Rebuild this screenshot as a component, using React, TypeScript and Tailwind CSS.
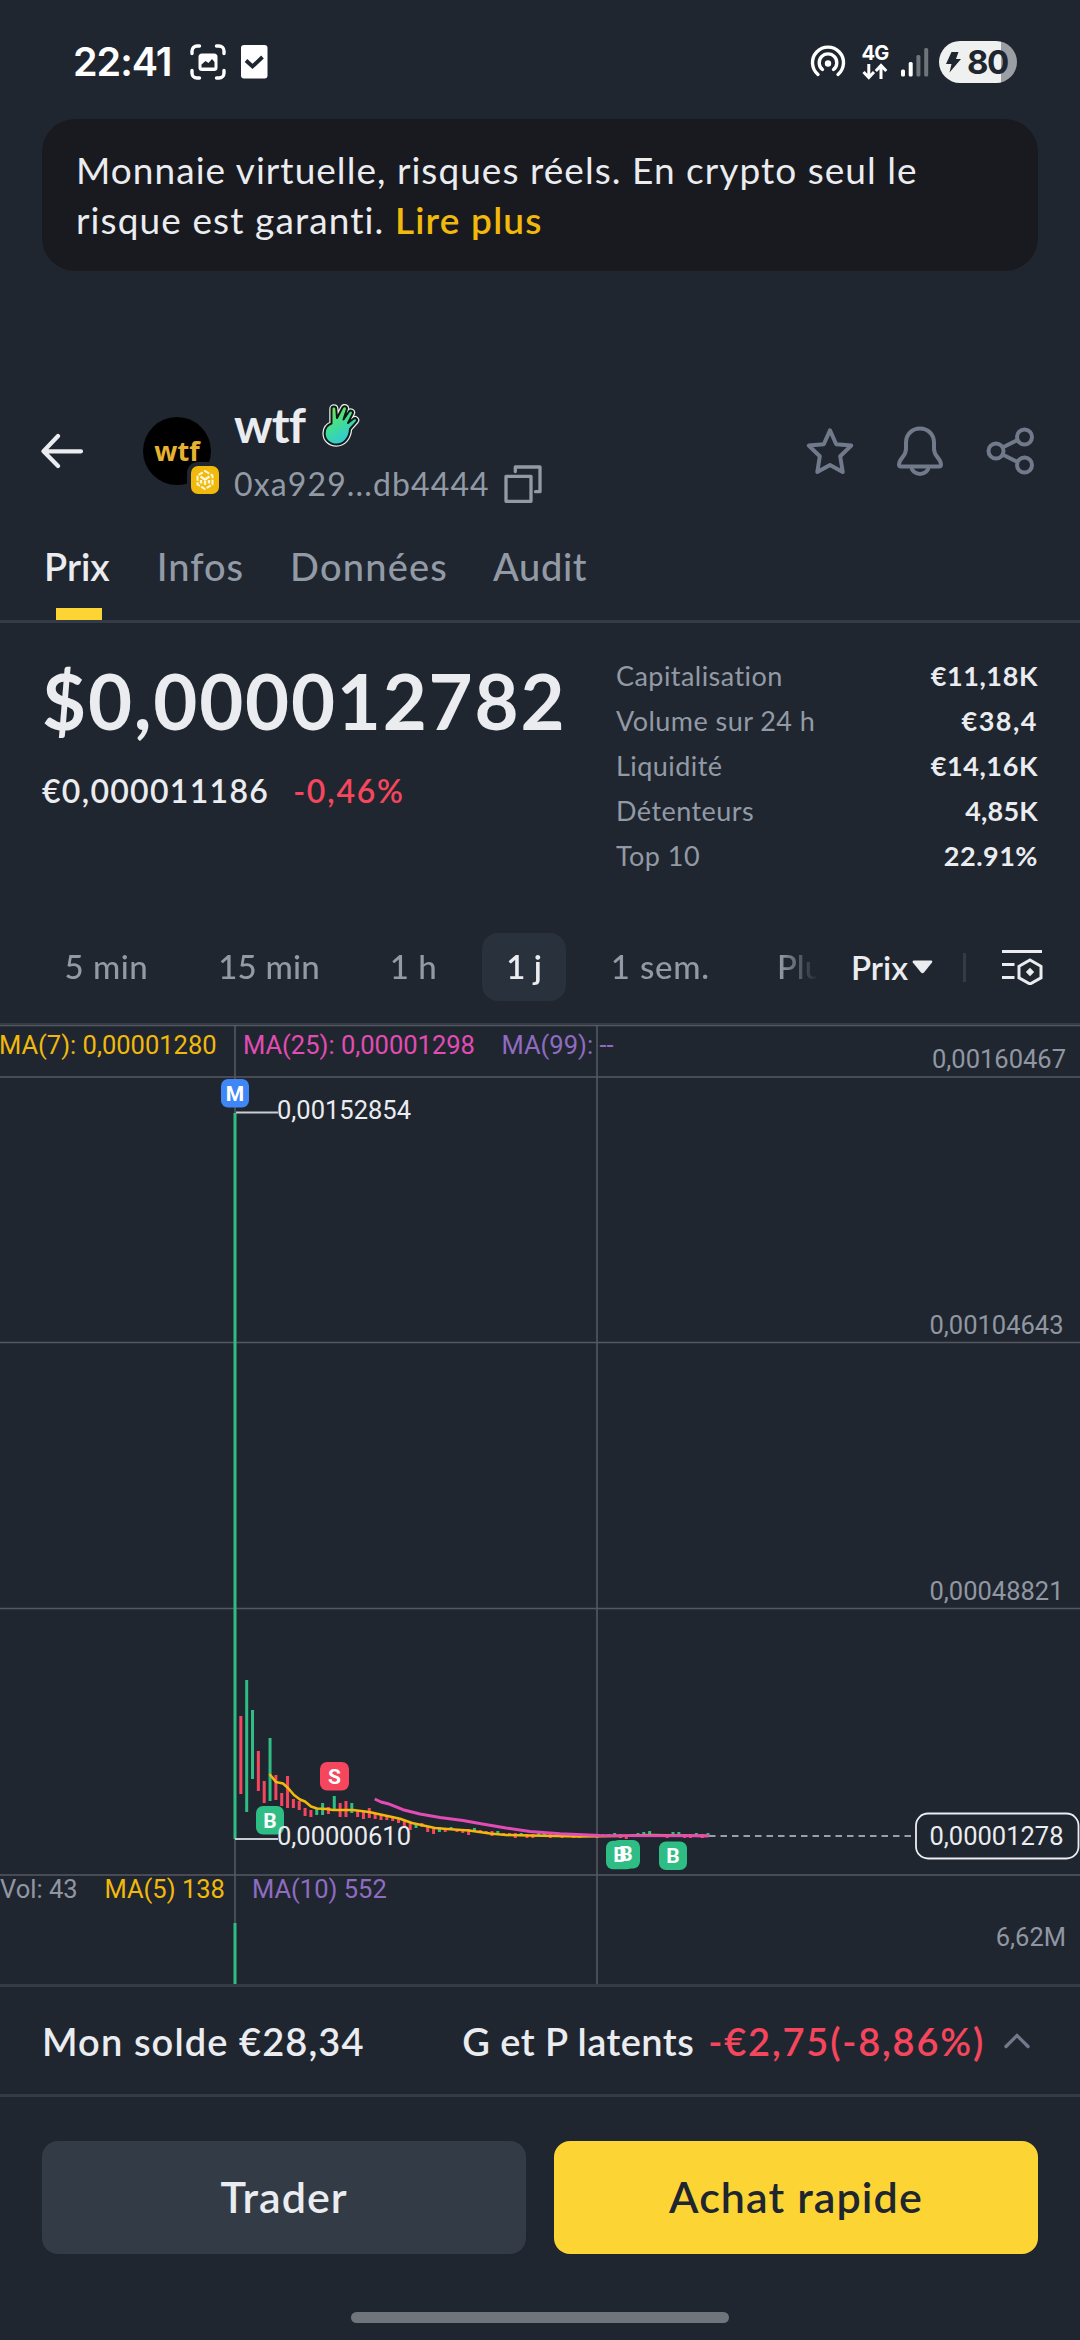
import type { ReactNode } from "react";

function StatusBar() {
  return (
    <div className="flex h-[119px] items-center pt-[5px] pl-[73px] pr-[63px] text-white">
      <span className="w-[117px] font-[Inter] text-[39.5px] font-semibold tracking-[-1px] leading-[48px]">22:41</span>
      <svg className="h-[36px] w-[36px]" viewBox="0 0 36 36" fill="none">
        <g stroke="#fff" strokeWidth="3.4" strokeLinecap="round">
          <path d="M2 9.500V7a5 5 0 0 1 5-5h2.500M26.500 2H29a5 5 0 0 1 5 5v2.500M34 26.500V29a5 5 0 0 1-5 5h-2.500M9.500 34H7a5 5 0 0 1-5-5v-2.500" />
        </g>
        <rect x="8.500" y="9.500" width="19" height="17.500" rx="3.500" fill="#fff" />
        <path d="M11.500 23.500v-3l4-3.500 3 2 3.500-4 2.500 3v5.500z" fill="#202630" />
      </svg>
      <svg className="ml-[15px] h-[34px] w-[27px]" viewBox="0 0 27 34" fill="none">
        <rect width="26.500" height="33.500" rx="3" fill="#fff" />
        <path d="M5 15.500l6.500 6L21.500 12" stroke="#202630" strokeWidth="3.800" />
      </svg>
      <div className="flex-1" />
      <svg className="h-[34px] w-[36px]" viewBox="0 0 36 34" fill="none" stroke="#fff" strokeWidth="3.400" strokeLinecap="round">
        <path d="M8 29.500a15.500 15.500 0 1 1 20 0" />
        <path d="M12.500 24.500a8.800 8.800 0 1 1 11 0" />
        <circle cx="18" cy="18.500" r="3.200" fill="#fff" stroke="none" />
      </svg>
      <div className="ml-[16px] flex w-[26px] flex-col items-center">
        <span className="font-[Inter] text-[20px] font-bold leading-[19px] tracking-[-0.8px]">4G</span>
        <svg className="h-[17px] w-[26px]" viewBox="0 0 26 17" fill="none" stroke="#fff" strokeWidth="3">
          <path d="M6.800 1v13M1.500 9l5.300 5.500L12 9M19 16V3M13.800 8L19 2.500 24.300 8" />
        </svg>
      </div>
      <svg className="ml-[12px] h-[30px] w-[29px]" viewBox="0 0 29 30">
        <rect x="1" y="22.500" width="4" height="7" rx="1.500" fill="#fff" />
        <rect x="8.700" y="15" width="4" height="14.500" rx="1.500" fill="#fff" />
        <rect x="16.400" y="8" width="4" height="21.500" rx="1.500" fill="#70747b" />
        <rect x="24.200" y="1" width="4" height="28.500" rx="1.500" fill="#70747b" />
      </svg>
      <div className="ml-[10px] flex h-[42px] w-[78px] items-center rounded-full bg-[linear-gradient(90deg,#eff1f1_80%,#9b9ea3_80%)] pl-[6px] text-[#202630]">
        <svg className="h-[22px] w-[17px]" viewBox="0 0 17 22" fill="#202630">
          <path d="M6.500 1h7l-2.500 7h5L4.500 21.500 6.500 13H1z" />
        </svg>
        <span className="ml-[5px] font-[Inter] text-[33px] font-bold leading-[42px] tracking-[-1.500px]">80</span>
      </div>
    </div>
  );
}

function HandIcon() {
  return (
    <svg className="ml-[17px] h-[43px] w-[38px]" viewBox="0 0 38 43" fill="none">
      <defs>
        <linearGradient id="hand" x1="0.200" y1="0" x2="0.700" y2="1">
          <stop offset="0" stopColor="#7be04a" />
          <stop offset="0.500" stopColor="#3fdc9a" />
          <stop offset="1" stopColor="#2fc4e6" />
        </linearGradient>
        <path
          id="hand-shape"
          d="M9.500 19.500V5c0-3.200 4.500-3.200 4.800 0l.7 9L20.500 3.500c1.500-2.500 5.300-1 4.300 2l-3.300 10 5.500-8c1.800-2.200 5-.3 3.600 2.400L26 19l5.500-4.300c2.500-1.600 4.800 1 2.800 3.200L28 25c-.5 9-6 15.500-13.500 15.500-7 0-12.300-5-11.800-12C3 24 5.500 21 9.500 19.500z"
        />
      </defs>
      <use href="#hand-shape" stroke="#e6ebe6" strokeWidth="4.500" strokeLinejoin="round" />
      <use href="#hand-shape" fill="url(#hand)" stroke="#0c1a16" strokeWidth="2" strokeLinejoin="round" />
    </svg>
  );
}

function Header() {
  return (
    <header className="mt-[120px] flex h-[120px] items-center pr-[45px] pl-[41px]">
      <svg className="h-[36px] w-[43px]" viewBox="0 0 43 36" fill="none" stroke="#eaecef" strokeWidth="4.200" strokeLinecap="round" strokeLinejoin="round">
        <path d="M17 3L2.500 18.300 17 33M2.500 18.300h37.500" />
      </svg>
      <div className="relative ml-[59px] flex h-[68px] w-[68px] items-center justify-center rounded-full bg-black">
        <span className="font-['Open_Sans'] text-[27px] font-bold leading-[28px] text-[#e8b231]">wtf</span>
        <div className="absolute top-[45px] left-[44px] flex h-[36px] w-[36px] items-center justify-center rounded-[11px] bg-[#202630]">
          <div className="flex h-[28px] w-[28px] items-center justify-center rounded-[7px] bg-[#f0b90b]">
            <svg className="h-[20px] w-[18px]" viewBox="0 0 18 20" fill="none" stroke="#fff6d8" strokeWidth="2">
              <path d="M9 1l7.500 4.500v9L9 19l-7.500-4.500v-9z" strokeDasharray="5 1.500" />
              <path d="M4.500 6.500L9 9.500l4.500-3M9 9.500V15M5 10v3.500M13 10v3.500" strokeWidth="2.400" />
            </svg>
          </div>
        </div>
      </div>
      <div className="ml-[23px] mt-[4px] self-start">
        <div className="flex h-[60px] items-center">
          <span className="text-[48px] font-bold leading-[60px] tracking-[-0.800px]">wtf</span>
          <HandIcon />
        </div>
        <div className="flex h-[58px] items-center text-[#929aa5]">
          <span className="text-[32px] leading-[58px] tracking-[1.130px]">0xa929...db4444</span>
          <svg className="ml-[14px] h-[38px] w-[38px]" viewBox="0 0 38 38" fill="none" stroke="#929aa5" strokeWidth="3.300" strokeLinejoin="round" strokeLinecap="round">
            <rect x="2" y="11.300" width="25" height="25" />
            <path d="M11.300 6.500V2H36v24.700h-4.500" />
          </svg>
        </div>
      </div>
      <div className="ml-auto flex items-center gap-[42px]">
        <svg className="h-[50px] w-[48px]" viewBox="0 0 48 50" fill="none" stroke="#707a8a" strokeWidth="4" strokeLinejoin="round">
          <path d="M24 4.300L30.200 18.200 45.200 19.600 34.200 30.300 36.700 46 24 39 11.300 46 13.800 30.300 2.800 19.600 17.800 18.200z" />
        </svg>
        <svg className="h-[50px] w-[48px]" viewBox="0 0 48 50" fill="none" stroke="#707a8a" strokeWidth="4" strokeLinejoin="round">
          <path d="M24 2.500c-8 0-14 6-14 14V23c0 8-7 9-7 15.500q0 2 2 2H43q2 0 2-2C45 32 38 31 38 23v-6.500c0-8-6-14-14-14z" />
          <path d="M15.500 40.500a8.500 7.500 0 0 0 17 0" />
        </svg>
        <svg className="h-[50px] w-[49px]" viewBox="0 0 49 50" fill="none" stroke="#707a8a" strokeWidth="4">
          <circle cx="10" cy="25" r="7.500" />
          <circle cx="38.500" cy="11" r="7.500" />
          <circle cx="38.500" cy="39" r="7.500" />
          <path d="M16.500 21.500L31.500 14M16.500 28.500L31.500 36" />
        </svg>
      </div>
    </header>
  );
}

function Tabs() {
  return (
    <nav className="flex h-[112px] border-b-[3px] border-[#333b47] pl-[44px] text-[38px] font-medium leading-[111px] text-[#929aa5]">
      <span className="relative font-semibold text-[#eaecef]">
        Prix
        <span className="absolute bottom-0 left-[12px] h-[12px] w-[46px] bg-[#fcd535]" />
      </span>
      <span className="ml-[47px] tracking-[1px]">Infos</span>
      <span className="ml-[46px] tracking-[1.200px]">Données</span>
      <span className="ml-[45px] tracking-[0.600px]">Audit</span>
    </nav>
  );
}

function Stat({ label, children }: { label: string; children: ReactNode }) {
  return (
    <div className="flex justify-between">
      <span className="tracking-[0.450px] text-[#929aa5]">{label}</span>
      <span className="font-bold">{children}</span>
    </div>
  );
}

function PriceInfo() {
  return (
    <section className="flex h-[288px] pl-[42px]">
      <div className="w-[574px] pt-[32px]">
        <div className="text-[76px] font-bold leading-[92px] tracking-[1.800px]">$0,000012782</div>
        <div className="mt-[24px] flex gap-[24px] text-[32px] font-semibold leading-[40px]">
          <span className="tracking-[1.300px]">€0,000011186</span>
          <span className="tracking-[1.800px] text-[#f6465d]">-0,46%</span>
        </div>
      </div>
      <div className="w-[422px] pt-[30px] text-[27px] leading-[45px]">
        <Stat label="Capitalisation"><span className="tracking-[0.600px]">€11,18K</span></Stat>
        <Stat label="Volume sur 24 h"><span className="tracking-[1.500px]">€38,4</span></Stat>
        <Stat label="Liquidité"><span className="tracking-[0.600px]">€14,16K</span></Stat>
        <Stat label="Détenteurs"><span className="tracking-[0.200px]">4,85K</span></Stat>
        <Stat label="Top 10"><span className="tracking-[0.500px]">22.91%</span></Stat>
      </div>
    </section>
  );
}

function Intervals() {
  return (
    <div className="flex h-[114px] items-center border-b-2 border-[#333b47] pr-[37px] text-[33px] font-medium">
      <div className="flex w-[820px] gap-[20px] overflow-hidden whitespace-nowrap pl-[39.500px] leading-[66px] text-[#929aa5] [mask-image:linear-gradient(90deg,#000_780px,transparent_818px)]">
        <span className="px-[25px] tracking-[0.500px]">5 min</span>
        <span className="px-[25px] tracking-[0.200px]">15 min</span>
        <span className="px-[25px] tracking-[0.500px]">1 h</span>
        <span className="h-[68px] rounded-[16px] bg-[#29313d] px-[24px] font-semibold text-[#eaecef]">1 j</span>
        <span className="px-[25px] tracking-[0.800px]">1 sem.</span>
        <span className="-ml-[3px] px-[25px]">Plus</span>
      </div>
      <span className="ml-[31px] font-semibold leading-[66px]">Prix</span>
      <svg className="ml-[4px] h-[14px] w-[21px]" viewBox="0 0 21 14" fill="#eaecef">
        <path d="M1.500 0.500h18q1.500 0.500 0.500 2L12 12.500q-1.500 1.300-3 0L0.800 2.500q-.8-1.500.700-2z" />
      </svg>
      <span className="ml-[30px] h-[29px] w-[3px] bg-[#333b47]" />
      <svg className="ml-auto h-[36px] w-[42px]" viewBox="0 0 42 36" fill="none" stroke="#eaecef" strokeWidth="3">
        <path d="M1 2.500h40M1 15.500h12.500M1 28.500h12.500" />
        <path d="M29 11l11 6.300v11.500L29 35l-11-6.200V17.300z" />
        <path d="M29 18.700l4.200 4.300L29 27.300 24.800 23z" fill="#eaecef" stroke="none" />
      </svg>
    </div>
  );
}

// [high, low, rising] of each daily candle, in chart pixels
const CANDLES: [number, number, number][] = [
  [1115, 1841, 1], [1718, 1796, 0], [1682, 1814, 1], [1712, 1781, 1], [1753, 1793, 0], [1783, 1805, 0], [1740, 1803, 1],
  [1777, 1802, 0], [1795, 1808, 0], [1778, 1810, 0], [1801, 1810, 0], [1803, 1812, 0], [1810, 1818, 0], [1812, 1819, 0],
  [1810, 1817, 1], [1805, 1817, 1], [1809, 1816, 0], [1798, 1812, 1], [1805, 1819, 0], [1803, 1819, 0], [1805, 1815, 1],
  [1812, 1819, 0], [1813, 1821, 0], [1810, 1820, 0], [1815, 1821, 0], [1816, 1822, 0], [1817, 1822, 0], [1818, 1823, 0],
  [1820, 1825, 0], [1823, 1830, 0], [1824, 1832, 0], [1825, 1830, 1], [1825, 1829, 0], [1828, 1834, 0], [1830, 1836, 0],
  [1829, 1834, 1], [1830, 1834, 0], [1829, 1832, 1], [1831, 1834, 0], [1831, 1835, 0], [1831, 1837, 0], [1830, 1833, 1],
  [1832, 1835, 0], [1833, 1836, 0], [1833, 1838, 0], [1833, 1836, 1], [1835, 1838, 0], [1835, 1838, 0], [1835, 1840, 0],
  [1835, 1838, 1], [1836, 1840, 0], [1836, 1840, 0], [1834, 1838, 1], [1834, 1838, 1], [1836, 1840, 0], [1834, 1838, 1],
  [1836, 1840, 0], [1836, 1838, 1], [1836, 1840, 0], [1836, 1840, 0], [1836, 1839, 1], [1836, 1839, 0], [1836, 1840, 0],
  [1836, 1839, 0], [1836, 1839, 1], [1835, 1839, 1], [1836, 1840, 0], [1837, 1841, 0], [1836, 1839, 0], [1835, 1839, 1],
  [1834, 1839, 1], [1833, 1839, 1], [1836, 1839, 0], [1836, 1839, 0], [1836, 1840, 0], [1834, 1838, 1], [1834, 1838, 1],
  [1836, 1840, 0], [1836, 1840, 0], [1835, 1839, 1], [1836, 1840, 0], [1835, 1839, 1],
];

function Marker({ x, y, fill, letter, w = 28 }: { x: number; y: number; fill: string; letter: string; w?: number }) {
  return (
    <g>
      <rect x={x - w / 2} y={y - 14} width={w} height="28.500" rx="7" fill={fill} />
      <text x={x} y={y + 7.500} textAnchor="middle" fontSize="21" fontWeight="700" fill="#fff">{letter}</text>
    </g>
  );
}

function Chart() {
  return (
    <svg className="block h-[959px] w-[1080px] font-[Roboto]" viewBox="0 1027 1080 959" fontSize="25.500">
      <g stroke="#55585f" strokeWidth="1.600">
        <path d="M0 1027.500H1080M0 1079H1080M0 1344.500H1080M0 1610.500H1080M0 1877H1080" />
        <path d="M235 1027V1986M597 1027V1986" />
      </g>
      <g fill="#9097a2" textAnchor="end">
        <text x="1066" y="1070">0,00160467</text>
        <text x="1063.500" y="1336">0,00104643</text>
        <text x="1063.500" y="1602">0,00048821</text>
        <text x="1066" y="1948">6,62M</text>
      </g>
      <text x="-1" y="1056" fill="#f0b90b">MA(7): 0,00001280</text>
      <text x="243" y="1056" fill="#e24cb4">MA(25): 0,00001298</text>
      <text x="501.500" y="1056" fill="#8f6cc0">MA(99): --</text>
      <text x="0" y="1900" fill="#9097a2">Vol: 43</text>
      <text x="104.500" y="1900" fill="#f0b90b">MA(5) 138</text>
      <text x="252" y="1900" fill="#8f6cc0">MA(10) 552</text>

      {CANDLES.map(([high, low, up], i) => (
        <rect key={i} x={233.500 + i * 5.840} y={high} width="3" height={low - high} fill={up ? "#2ebd85" : "#f6465d"} />
      ))}
      <rect x="233.500" y="1925" width="3" height="61" fill="#2ebd85" />
      <path d="M236 1114.500H278M235 1841H278" stroke="#c9ccd1" strokeWidth="1.800" />
      <polyline
        fill="none" stroke="#f0b90b" strokeWidth="2.600" strokeLinejoin="round"
        points="269.500,1776 276,1784 283,1785.500 288,1790 294,1797 300,1801.500 305,1803.500 311,1808.500 317,1810.500 327,1811 333,1812 353,1812 369,1814 392,1819 400,1820.700 412,1825 420,1826.700 435,1830 447,1831 469,1832.500 490,1835.500 506,1837 530,1837.500 580,1838.500 620,1838 650,1837 708,1838"
      />
      <polyline
        fill="none" stroke="#e24cb4" strokeWidth="3" strokeLinejoin="round"
        points="374.700,1801 381,1804 388,1805.700 403,1811.700 420,1816 440,1819.500 463,1822.500 481,1825.700 506,1830 530,1833.500 560,1835.700 600,1837.500 709,1837.700"
      />
      <path d="M709 1838H915" stroke="#9a9ea6" strokeWidth="2" strokeDasharray="6.500 5" />
      <Marker x={235} y={1095} fill="#3f86f6" letter="M" />
      <Marker x={270} y={1822} fill="#2ebd85" letter="B" />
      <Marker x={334.500} y={1778} fill="#f6465d" letter="S" w={29} />
      <Marker x={620} y={1856.800} fill="#2ebd85" letter="" />
      <Marker x={626} y={1856} fill="#2ebd85" letter="" />
      <text x="620" y="1864.300" textAnchor="middle" fontSize="21" fontWeight="700" fill="#fff">B</text>
      <text x="626" y="1863" textAnchor="middle" fontSize="21" fontWeight="700" fill="#fff">B</text>
      <Marker x={673} y={1857.500} fill="#2ebd85" letter="B" />
      <g fill="#eaecef">
        <text x="277" y="1120.500">0,00152854</text>
        <text x="277" y="1846.500">0,00000610</text>
        <rect x="916" y="1815.500" width="162.500" height="45" rx="12" fill="#202630" stroke="#eaecef" strokeWidth="1.800" />
        <text x="929.500" y="1847">0,00001278</text>
      </g>
    </svg>
  );
}

function Balance() {
  return (
    <div className="flex h-[113px] items-center border-y-[3px] border-[#333b47] pl-[42px] pr-[50px] text-[38px] font-semibold leading-[50px]">
      <span className="tracking-[1.100px]">Mon solde €28,34</span>
      <span className="ml-auto tracking-[0.450px]">G et P latents</span>
      <span className="ml-[14px] tracking-[1.800px] text-[#f6465d]">-€2,75(-8,86%)</span>
      <svg className="ml-[19px] h-[16px] w-[26px]" viewBox="0 0 26 16" fill="none" stroke="#707a8a" strokeWidth="3.300" strokeLinecap="round">
        <path d="M2 13.500L13 2.500l11 11" />
      </svg>
    </div>
  );
}

export default function App() {
  return (
    <div className="flex h-[2340px] w-[1080px] flex-col overflow-hidden bg-[#202630] font-['Lato','Liberation_Sans',sans-serif] text-[#eaecef]">
      <StatusBar />
      <div className="mx-[42px] h-[152px] rounded-[33px] bg-[#191a1f] py-[26px] pl-[34px] text-[37px] leading-[50px] whitespace-nowrap">
        <div className="tracking-[1.040px]">Monnaie virtuelle, risques réels. En crypto seul le</div>
        <div className="tracking-[1.100px]">
          risque est garanti. <span className="font-semibold tracking-[1.200px] text-[#f0b90b]">Lire plus</span>
        </div>
      </div>
      <Header />
      <Tabs />
      <PriceInfo />
      <Intervals />
      <Chart />
      <Balance />
      <div className="mt-[44px] grid grid-cols-2 gap-[28px] px-[42px] text-[43px] font-semibold">
        <button className="h-[113px] rounded-[16px] bg-[#333b47] tracking-[1px]">Trader</button>
        <button className="h-[113px] rounded-[16px] bg-[#fcd535] tracking-[1.100px] text-[#202630]">Achat rapide</button>
      </div>
      <div className="mx-auto mt-[58px] h-[11px] w-[378px] rounded-full bg-[#70747b]" />
    </div>
  );
}
